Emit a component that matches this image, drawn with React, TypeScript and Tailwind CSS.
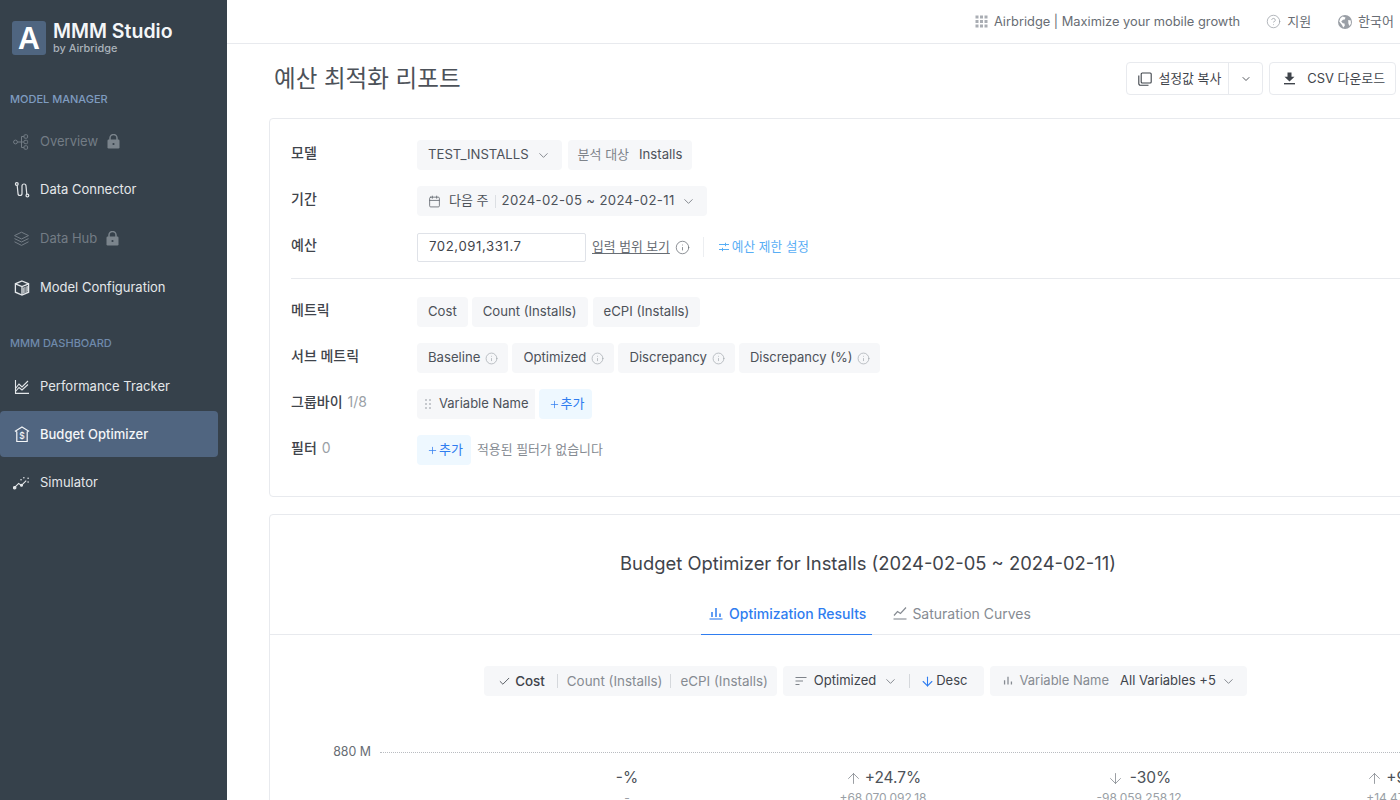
import React from "react";
import { ChevronDown, Info, Check, ArrowUp, ArrowDown, HelpCircle, Calendar, Plus } from "lucide-react";

function OverviewIcon() {
  return (
    <svg width="17" height="18" viewBox="0 0 17 18" fill="none" stroke="currentColor" strokeWidth="1">
      <circle cx="2.5" cy="9" r="1.9" />
      <path d="M4.4 9h4.1M8.5 3.5v11M8.5 3.5h2.4M8.5 14.5h2.4M8.5 9h2.4" />
      <rect x="11" y="1.8" width="3.6" height="3.4" rx="1" />
      <rect x="11" y="7.3" width="3.6" height="3.4" rx="1" />
      <rect x="11" y="12.8" width="3.6" height="3.4" rx="1" />
    </svg>
  );
}
function ConnectorIcon() {
  return (
    <svg width="16" height="16" viewBox="0 0 16 16" fill="none" stroke="currentColor" strokeWidth="1.2">
      <circle cx="2.8" cy="2" r="1.4" />
      <circle cx="13.4" cy="13.6" r="1.4" />
      <path d="M3.2 3.4 4 11.5a2 2 0 0 0 4 0V4a2 2 0 0 1 4 0l.8 8.2" />
    </svg>
  );
}
function HubIcon() {
  return (
    <svg width="17" height="16" viewBox="0 0 17 16" fill="none" stroke="currentColor" strokeWidth="1">
      <path d="M8.5 1.2 15.5 4.6 8.5 8 1.5 4.6z" />
      <path d="M1.5 7.6 8.5 11 15.5 7.6M1.5 10.8 8.5 14.4 15.5 10.8" />
    </svg>
  );
}
function CubeIcon() {
  return (
    <svg width="16" height="16" viewBox="0 0 16 16" fill="none" stroke="currentColor" strokeWidth="1.3">
      <path d="M8 1 14.6 3.8v8.4L8 15 1.4 12.2V3.8z" />
      <path d="M1.4 3.8 8 6.6 14.6 3.8M8 6.6V15" />
      <path d="M9.4 7.5v6M10.8 7v6M12.2 6.4v6M13.4 6v5.5" strokeWidth="0.8" />
    </svg>
  );
}
function TrackerIcon() {
  return (
    <svg width="16" height="16" viewBox="0 0 16 16" fill="none" stroke="currentColor" strokeWidth="1.1">
      <path d="M1.5 1v13.4h13.5" />
      <path d="M1.5 9.5 5 5l3 3 6-6" />
      <path d="M1.5 12.5 5 8.5l3 2.5 6-5.5" />
    </svg>
  );
}
function BudgetIcon() {
  return (
    <svg width="16" height="17" viewBox="0 0 16 17" fill="none" stroke="currentColor" strokeWidth="1.2">
      <path d="M8 1 14.5 5 13.2 6V15.5H2.8V6L1.5 5z" />
      <text x="8" y="12.6" textAnchor="middle" fontSize="8.5" fill="currentColor" stroke="none" fontFamily="Inter">$</text>
    </svg>
  );
}
function SimIcon() {
  return (
    <svg width="18" height="16" viewBox="0 0 18 16" fill="none" stroke="currentColor" strokeWidth="1.2">
      <path d="M1.5 13 6 8.5l3 2 5-5" />
      <circle cx="1.8" cy="13" r="1.3" fill="currentColor" />
      <circle cx="9" cy="10.5" r="1" fill="currentColor" />
      <path d="M8.5 4.5h.01M11.5 2.5h.01M16 3h.01M16 7h.01" strokeWidth="1.7" strokeLinecap="round" />
    </svg>
  );
}
function LockIcon() {
  return (
    <svg width="13" height="15" viewBox="0 0 13 15" className="text-[#7b848c]" fill="currentColor">
      <path d="M3 6V4a3.5 3.5 0 0 1 7 0v2" fill="none" stroke="currentColor" strokeWidth="1.5" />
      <rect x="0.5" y="5.5" width="12" height="9" rx="1.2" />
      <circle cx="6.5" cy="10" r="1.1" fill="#36414b" />
    </svg>
  );
}
function SliderIcon() {
  return (
    <svg width="12" height="12" viewBox="0 0 12 12" fill="none" stroke="currentColor" strokeWidth="1">
      <path d="M1 3.5h10M1 8.5h10" />
      <path d="M7.5 1.8v3.4M4.5 6.8v3.4" />
    </svg>
  );
}
function SortIcon() {
  return (
    <svg width="12" height="12" viewBox="0 0 12 12" fill="none" stroke="#7e838a" strokeWidth="1.2">
      <path d="M0.5 2.5h11M0.5 6h7.5M0.5 9.5h4" />
    </svg>
  );
}
function DotGrid({ cls }: { cls: string }) {
  return (
    <svg width="13" height="13" viewBox="0 0 13 13" className={cls} fill="currentColor">
      {[0.5, 5, 9.5].map((x) =>
        [0.5, 5, 9.5].map((y) => <rect key={`${x}-${y}`} x={x} y={y} width="3" height="3" />)
      )}
    </svg>
  );
}
function DragDots() {
  return (
    <svg width="6" height="10" viewBox="0 0 6 10" className="text-[#c6c9ce]" fill="currentColor">
      {[0, 4].map((x) =>
        [0, 4, 8].map((y) => <rect key={`${x}-${y}`} x={x} y={y} width="2" height="2" />)
      )}
    </svg>
  );
}
function CopyIcon() {
  return (
    <svg width="14" height="14" viewBox="0 0 14 14" fill="none" stroke="currentColor" strokeWidth="1.1">
      <rect x="3.2" y="1" width="10" height="10" rx="1" />
      <path d="M0.8 3.5v8.2a1.5 1.5 0 0 0 1.5 1.5h8.2" />
    </svg>
  );
}
function DownloadIcon() {
  return (
    <svg width="13" height="13" viewBox="0 0 13 13" fill="currentColor">
      <path d="M4.5 0.5h4v4.2h3L6.5 9.4 1.5 4.7h3z" />
      <rect x="1" y="11" width="11" height="1.4" />
    </svg>
  );
}
function GlobeFilled() {
  return (
    <svg width="14" height="14" viewBox="0 0 14 14" className="text-[#9a9fa6]" fill="currentColor">
      <circle cx="7" cy="7" r="7" />
      <path d="M4.5 1.4 7.5 2.5 6.8 4.4 5 4.8 3.2 6.5 4.8 8.2 6.5 8.5 6.8 10.8 5.2 12.5 4 10 2.4 8 1.2 6.5 2.4 3.2zM10.2 5l2.6 0.6 0.1 3.2-1.5 2.2-1-2.5z" fill="#ffffff" />
    </svg>
  );
}
function BarsIcon({ size = 14, base = true }: { size?: number; base?: boolean }) {
  return (
    <svg width={size} height={size} viewBox="0 0 14 14" fill="none" stroke="currentColor" strokeWidth="1.5">
      <path d="M3 11V6M7 11V2M11 11V7.5" />
      {base && <path d="M0.5 13h13" strokeWidth="1.1" />}
    </svg>
  );
}
function CurveIcon() {
  return (
    <svg width="14" height="14" viewBox="0 0 14 14" fill="none" stroke="currentColor" strokeWidth="1.2">
      <path d="M1 9.5 4.5 5.5 7.5 7.5 13 1.5" />
      <path d="M0.5 13h13" strokeWidth="1.1" />
    </svg>
  );
}

function NavItem({ icon, label, disabled, active }: { icon: React.ReactNode; label: string; disabled?: boolean; active?: boolean }) {
  return (
    <div
      className={`flex h-[46px] w-[218px] items-center gap-[10px] rounded-[4px] pl-[13px] pt-[1px] text-[13px] ${
        active ? "bg-[#506580] font-medium text-[#f4f6f8]" : disabled ? "text-[#737c85]" : "text-[#e4e7ea]"
      }`}
    >
      <span className="flex w-[17px] justify-center">{icon}</span>
      <span>{label}</span>
      {disabled && <span className="-ml-[1px]"><LockIcon /></span>}
    </div>
  );
}

function Chip({ children, cls = "" }: { children: React.ReactNode; cls?: string }) {
  return (
    <div className={`flex h-[30px] items-center rounded-[4px] bg-[#f6f7f9] px-[11px] text-[13.15px] text-[#4d5259] ${cls}`}>
      {children}
    </div>
  );
}

function Row({ label, count, children }: { label: string; count?: string; children: React.ReactNode }) {
  return (
    <div className="flex h-[30px] items-center">
      <div className="w-[126px] pb-[6px] text-[14px] font-medium text-[#3f444b]">
        {label}
        {count && <span className="ml-[5px] font-normal text-[#9a9fa6]">{count}</span>}
      </div>
      <div className="flex items-center gap-[4px]">{children}</div>
    </div>
  );
}

function SubMetric({ label, cls = "" }: { label: string; cls?: string }) {
  return (
    <Chip cls={`gap-[5px] pr-[10px] ${cls}`}>
      {label}
      <Info size={13} className="text-[#a3a8ae]" strokeWidth={1.3} />
    </Chip>
  );
}

function AddChip() {
  return (
    <div className="flex h-[30px] items-center gap-px rounded-[4px] bg-[#eef8ff] pl-[10px] pr-[8px] text-[13px] text-[#2f7df0]">
      <Plus size={11} strokeWidth={1.6} />
      추가
    </div>
  );
}

function Stat({ arrow, value, sub, cls = "w-[256px]" }: { arrow?: "up" | "down"; value: string; sub: string; cls?: string }) {
  return (
    <div className={`flex shrink-0 flex-col items-center ${cls}`}>
      <div className="flex h-[20px] items-center gap-[3px] text-[15.5px] text-[#4d5259]">
        {arrow === "up" && <ArrowUp size={17} strokeWidth={1.1} className="text-[#7e838a]" />}
        {arrow === "down" && <ArrowDown size={17} strokeWidth={1.1} className="mr-[3px] text-[#7e838a]" />}
        {value}
      </div>
      <div className="mt-[1px] text-[12px] text-[#9a9fa6]">{sub}</div>
    </div>
  );
}

export default function App() {
  return (
    <div className="flex h-[800px] w-[1400px] overflow-hidden bg-white font-['Inter','Noto_Sans_CJK_KR',sans-serif]">
      <aside className="flex h-full w-[227px] shrink-0 flex-col bg-[#36414b]">
        <div className="flex h-[75px] items-start pl-[12px] pt-[21px]">
          <div className="flex h-[34px] w-[34px] items-center justify-center rounded-[3px] bg-[#4f6580] text-[30px] font-semibold leading-none text-white">
            A
          </div>
          <div className="-mt-[1px] ml-[7px] flex flex-col">
            <span className="text-[19.5px] font-semibold leading-[22px] text-[#f4f6f8]">MMM Studio</span>
            <span className="text-[10.9px] font-medium leading-[12px] text-[#aab2ba]">by Airbridge</span>
          </div>
        </div>
        <div className="mt-[17px] pl-[10px] text-[11px] font-medium leading-[14px] text-[#7f9cc0]">MODEL MANAGER</div>
        <div className="mt-[11px] flex flex-col gap-[3px]">
          <div className="-mb-px mt-px">
            <NavItem icon={<OverviewIcon />} label="Overview" disabled />
          </div>
          <NavItem icon={<ConnectorIcon />} label="Data Connector" />
          <NavItem icon={<HubIcon />} label="Data Hub" disabled />
          <NavItem icon={<CubeIcon />} label="Model Configuration" />
        </div>
        <div className="mt-[26px] pl-[10px] text-[11px] font-medium leading-[14px] text-[#6f8aab]">MMM DASHBOARD</div>
        <div className="mt-[13px] flex flex-col gap-[2px]">
          <NavItem icon={<TrackerIcon />} label="Performance Tracker" />
          <NavItem icon={<BudgetIcon />} label="Budget Optimizer" active />
          <NavItem icon={<SimIcon />} label="Simulator" />
        </div>
      </aside>

      <main className="flex min-w-0 flex-1 flex-col overflow-hidden">
        <header className="flex h-[44px] shrink-0 items-center justify-end border-b border-[#e8eaee] pr-[6px] text-[12.85px] text-[#686d74]">
          <DotGrid cls="mr-[6px] text-[#a9adb3]" />
          <span>Airbridge | Maximize your mobile growth</span>
          <HelpCircle size={15} strokeWidth={1.2} className="ml-[26px] mr-[6px] text-[#9a9fa6]" />
          <span className="text-[13px]">지원</span>
          <span className="ml-[27px] mr-[6px]"><GlobeFilled /></span>
          <span className="text-[13px]">한국어</span>
        </header>

        <div className="flex h-[69px] shrink-0 items-center justify-between pl-[47px] pr-[4px]">
          <h1 className="text-[23.55px] font-normal text-[#4d5259]">예산 최적화 리포트</h1>
          <div className="flex items-center gap-[6px] text-[12.9px] text-[#3f444b]">
            <div className="flex h-[33px] items-center rounded-[4px] border border-[#e8eaee]">
              <div className="flex h-full items-center gap-[6px] border-r border-[#e8eaee] pl-[11px] pr-[7px]">
                <CopyIcon />
                설정값 복사
              </div>
              <div className="flex h-full w-[33px] items-center justify-center">
                <ChevronDown size={12} strokeWidth={1.8} />
              </div>
            </div>
            <div className="flex h-[33px] items-center gap-[11px] rounded-[4px] border border-[#e8eaee] pl-[13px] pr-[10px]">
              <DownloadIcon />
              CSV 다운로드
            </div>
          </div>
        </div>

        <section className="ml-[42px] mt-[5px] flex w-[1198px] shrink-0 flex-col rounded-[4px] border border-[#e8eaee] pb-[31px] pl-[21px] pr-[21px] pt-[21px]">
          <div className="flex flex-col gap-[16px]">
            <Row label="모델">
              <Chip cls="gap-[7px] pr-[11px]">
                TEST_INSTALLS <ChevronDown size={15} strokeWidth={1.3} className="text-[#6e737a]" />
              </Chip>
              <Chip cls="ml-[2px] gap-[10px] pl-[10px] pr-[10px] text-[13.7px]">
                <span className="text-[13px] text-[#7e838a]">분석 대상</span> Installs
              </Chip>
            </Row>
            <Row label="기간">
              <Chip cls="pl-[11px] pr-[11px]">
                <Calendar size={13} strokeWidth={1.6} className="mr-[8px] text-[#686d74]" />
                <span className="text-[13px]">다음 주</span>
                <span className="mx-[6px] h-[13px] w-px bg-[#dcdfe3]" />
                <span className="tracking-[0.35px]">2024-02-05 ~ 2024-02-11</span>
                <ChevronDown size={15} strokeWidth={1.3} className="ml-[6px] text-[#6e737a]" />
              </Chip>
            </Row>
            <Row label="예산">
              <div className="flex h-[29px] w-[169px] items-center rounded-[2px] border border-[#dfe2e8] pl-[11px] text-[13.15px] tracking-[0.6px] text-[#3f444b]">
                702,091,331.7
              </div>
              <span className="ml-[2px] text-[12.8px] text-[#686d74] underline underline-offset-2">입력 범위 보기</span>
              <Info size={15} strokeWidth={1.2} className="ml-[1px] text-[#686d74]" />
              <span className="ml-[9px] mr-[10px] h-[20px] w-px bg-[#eceef1]" />
              <span className="flex items-center gap-[2px] text-[12.7px] text-[#58aef5]">
                <SliderIcon />
                예산 제한 설정
              </span>
            </Row>
          </div>
          <div className="mb-[18px] mt-[16px] h-px w-[1170px] bg-[#e8eaee]" />
          <div className="flex flex-col gap-[16px]">
            <Row label="메트릭">
              <Chip cls="px-[10.5px]">Cost</Chip>
              <Chip cls="px-[10.5px]">Count (Installs)</Chip>
              <Chip cls="ml-[1px] px-[10.5px] text-[13.6px]">eCPI (Installs)</Chip>
            </Row>
            <Row label="서브 메트릭">
              <SubMetric label="Baseline" />
              <SubMetric label="Optimized" />
              <SubMetric label="Discrepancy" />
              <SubMetric label="Discrepancy (%)" cls="text-[13px]" />
            </Row>
            <Row label="그룹바이" count="1/8">
              <Chip cls="rounded-r-none pl-[8px] pr-[6px] text-[13px] text-[#3f444b]">
                <DragDots />
                <span className="ml-[8px]">Variable Name</span>
              </Chip>
              <AddChip />
            </Row>
            <Row label="필터" count="0">
              <AddChip />
              <span className="ml-[2px] text-[12.9px] text-[#868b92]">적용된 필터가 없습니다</span>
            </Row>
          </div>
        </section>

        <section className="ml-[42px] mt-[17px] flex w-[1198px] shrink-0 flex-col rounded-t-[4px] border border-[#e8eaee]">
          <h2 className="mt-[34px] text-center text-[18.4px] font-normal leading-[28px] text-[#3f444b]">
            Budget Optimizer for Installs (2024-02-05 ~ 2024-02-11)
          </h2>
          <div className="mt-[19px] flex h-[39px] items-stretch justify-center border-b border-[#e8eaee] pl-[4px] text-[14px]">
            <div className="-mb-px flex items-center gap-[6px] border-b border-[#2f7df0] pb-[4px] pl-[8px] pr-[6px] font-medium text-[#2f7df0]">
              <BarsIcon />
              Optimization Results
            </div>
            <div className="ml-[13px] flex items-center gap-[5px] px-[8px] pb-[4px] text-[#868b92]">
              <CurveIcon />
              Saturation Curves
            </div>
          </div>

          <div className="mt-[31px] flex justify-center gap-[6px] pr-[5px] text-[13px]">
            <div className="flex h-[30px] items-center rounded-[4px] bg-[#f6f7f9] pl-[14px] pr-[9px] text-[13.4px] text-[#868b92]">
              <Check size={13} strokeWidth={1.7} className="mr-[4px] text-[#4d5259]" />
              <span className="font-medium text-[#3f444b]">Cost</span>
              <span className="ml-[12px] mr-[9px] h-[14px] w-px bg-[#d5d8dc]" />
              <span>Count (Installs)</span>
              <span className="ml-[8px] mr-[9px] h-[14px] w-px bg-[#d5d8dc]" />
              <span>eCPI (Installs)</span>
            </div>
            <div className="flex h-[30px] items-center rounded-[4px] bg-[#f6f7f9] pl-[12px] pr-[17px] text-[#3f444b]">
              <SortIcon />
              <span className="ml-[7px]">Optimized</span>
              <ChevronDown size={15} strokeWidth={1.3} className="ml-[7px] text-[#6e737a]" />
              <span className="ml-[11px] mr-[10px] h-[14px] w-px bg-[#d5d8dc]" />
              <ArrowDown size={15} strokeWidth={1.7} className="text-[#2f7df0]" />
              <span className="ml-[1px]">Desc</span>
            </div>
            <div className="flex h-[30px] items-center rounded-[4px] bg-[#f6f7f9] pl-[12px] pr-[11px] text-[#3f444b]">
              <span className="text-[#868b92]"><BarsIcon size={12} base={false} /></span>
              <span className="ml-[5px] text-[#868b92]">Variable Name</span>
              <span className="ml-[11px]">All Variables +5</span>
              <ChevronDown size={15} strokeWidth={1.3} className="ml-[5px] text-[#6e737a]" />
            </div>
          </div>

          <div className="mt-[48px] flex h-[16px] items-center pl-[63px]">
            <span className="w-[38px] text-right text-[12.4px] text-[#686d74]">880 M</span>
            <span className="ml-[9px] flex-1 border-t border-dotted border-[#b9bcc1]" />
          </div>
          <div className="mt-[8px] flex pl-[229px]">
            <Stat value="-%" sub="-" />
            <Stat arrow="up" value="+24.7%" sub="+68,070,092.18" />
            <Stat arrow="down" value="-30%" sub="-98,059,258.12" />
            <Stat arrow="up" value="+9.5%" sub="+14,471,255" cls="w-[267px]" />
          </div>
        </section>
      </main>
    </div>
  );
}
